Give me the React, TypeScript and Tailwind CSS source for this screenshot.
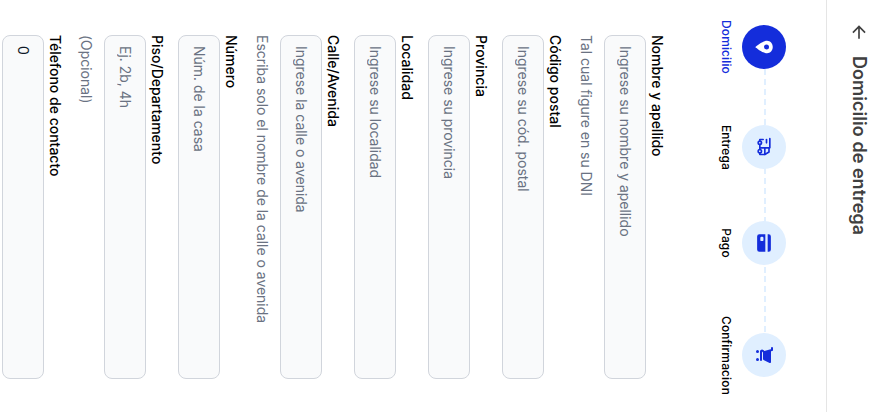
import type { ReactNode } from "react";
import { HiShoppingCart } from "react-icons/hi";
import { IoCard, IoLocationSharp } from "react-icons/io5";
import { TbTruckDelivery } from "react-icons/tb";
import { MdArrowBack } from "react-icons/md";

function Step({ label, icon, active }: { label: string; icon: ReactNode; active?: boolean }) {
  return (
    <li className="flex flex-col items-center">
      <div
        className={
          active
            ? "flex size-11 items-center justify-center rounded-full bg-[#142ddb] text-white"
            : "flex size-11 items-center justify-center rounded-full bg-[#e0efff] text-[#142ddb]"
        }
      >
        {icon}
      </div>
      <span
        className={
          active
            ? "mt-2 text-xs font-medium tracking-[0.12px] text-[#142ddb]"
            : "mt-2 text-xs font-medium tracking-[0.12px] text-black"
        }
      >
        {label}
      </span>
    </li>
  );
}

type FieldProps = { label: string; placeholder?: string; value?: string; helper?: string };

function Field({ label, placeholder, value, helper }: FieldProps) {
  return (
    <div className="flex flex-col">
      <label className="-mt-px mb-px text-sm font-medium text-black">{label}</label>
      <input
        className="h-[42px] w-full rounded-lg border border-gray-300 bg-gray-50 px-2.5 pt-[9px] pb-[11px] text-sm tracking-[-0.02px] text-gray-900 placeholder:text-gray-500"
        placeholder={placeholder}
        defaultValue={value}
      />
      {helper && <p className="mt-2 text-sm tracking-[-0.03px] text-gray-500">{helper}</p>}
    </div>
  );
}

const fields: FieldProps[] = [
  { label: "Nombre y apellido", placeholder: "Ingrese su nombre y apellido", helper: "Tal cual figure en su DNI" },
  { label: "Código postal", placeholder: "Ingrese su cód. postal" },
  { label: "Provincia", placeholder: "Ingrese su provincia" },
  { label: "Localidad", placeholder: "Ingrese su localidad" },
  {
    label: "Calle/Avenida",
    placeholder: "Ingrese la calle o avenida",
    helper: "Escriba solo el nombre de la calle o avenida",
  },
  { label: "Número", placeholder: "Núm. de la casa" },
  { label: "Piso/Departamento", placeholder: "Ej. 2b, 4h", helper: "(Opcional)" },
  { label: "Télefono de contacto", value: "0" },
];

export default function App() {
  return (
    <div className="h-[412px] w-[891px] overflow-hidden bg-white">
      <main className="h-[891px] w-[412px] origin-top-left translate-x-[891px] rotate-90 overflow-hidden bg-white font-['Inter',sans-serif]">
        <header className="flex h-[65px] items-center gap-3.5 border-b border-[#e5e5e5] pl-[22px] text-[#404040]">
          <MdArrowBack size={20} />
          <h1 className="text-lg font-semibold tracking-[0.04px]">Domicilio de entrega</h1>
        </header>
        <div className="relative mt-10 pr-[17px] pl-5">
          <div className="absolute top-5 right-[57px] left-[30px] h-0.5 bg-[repeating-linear-gradient(90deg,#e0efff_0px,#e0efff_6px,transparent_6px,transparent_9.86px)]" />
          <ol className="relative flex justify-between">
            <Step active label="Domicilio" icon={<IoLocationSharp size={20} />} />
            <Step label="Entrega" icon={<TbTruckDelivery size={20} />} />
            <Step label="Pago" icon={<IoCard size={20} />} />
            <Step label="Confirmacion" icon={<HiShoppingCart size={20} />} />
          </ol>
        </div>
        <form className="mt-[52px] flex flex-col gap-3 pr-[33px] pl-[35px]">
          {fields.map((field) => (
            <Field key={field.label} {...field} />
          ))}
        </form>
      </main>
    </div>
  );
}
